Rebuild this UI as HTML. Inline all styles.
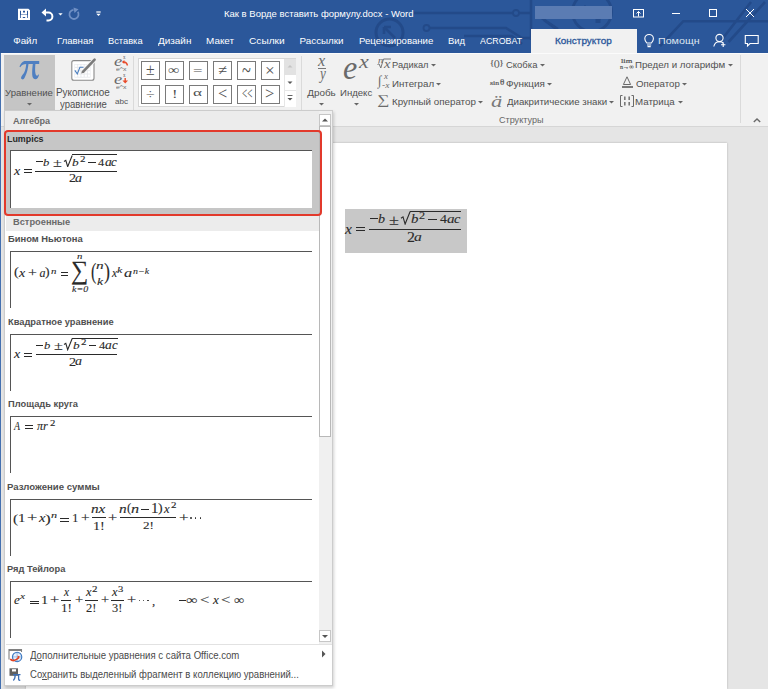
<!DOCTYPE html><html><head><meta charset="utf-8"><style>
html,body{margin:0;padding:0;}
body{width:768px;height:689px;overflow:hidden;position:relative;background:#fff;font-family:"Liberation Sans",sans-serif;}
.b{position:absolute;}
.t{position:absolute;white-space:nowrap;transform-origin:0 0;}
.s{}
</style></head><body>
<div class="b" style="left:0px;top:126px;width:768px;height:563px;background:#e5e5e5;"></div>
<div class="b" style="left:26px;top:143px;width:701px;height:546px;background:#fff;box-shadow:0 0 2px rgba(0,0,0,.25);"></div>
<div class="b" style="left:345px;top:209px;width:122px;height:44px;background:#c8c8c8;"></div>
<div class="b" style="left:0px;top:0px;width:768px;height:53px;background:#2b579a;"></div>
<svg class="b" style="left:0;top:0" width="768" height="53" viewBox="0 0 768 53">
<g stroke="#234a89" stroke-width="2.6" fill="none">
<path d="M414 13 H531"/><circle cx="516" cy="13" r="3" stroke-width="1.8" fill="#2b579a"/>
<path d="M531 0 V40"/>
<path d="M429 28 H506 L522 38 H531"/><circle cx="426.5" cy="28" r="3" stroke-width="1.8" fill="#2b579a"/>
<path d="M464 36 H512 L522 44"/>
<circle cx="389.5" cy="32.5" r="13.5" stroke-width="3"/>
<path d="M384 27 L395 38 M384 27 V34 M384 27 H391" stroke-width="2.6"/>
<path d="M544 20 L560 32"/>
<circle cx="592" cy="12" r="19.5" stroke-width="2.8"/><path d="M584 6 L600 20" stroke-width="2.8"/><rect x="595.5" y="18" width="5" height="5" fill="#234a89" stroke="none"/><path d="M540 17 L558 29"/>
<path d="M660 46 L683.3 21.2 H768 M721.5 40 L751 2 M728.5 42 L765 2"/>
</g></svg>
<svg class="b" style="left:0;top:0" width="110" height="28" viewBox="0 0 110 28">
<g fill="none" stroke="#fff" stroke-width="2">
<path d="M19 9.7 H28 L29 10.7 V19 H19 Z"/>
<path d="M22 9.7 V13.6 H26 V9.7"/>
<path d="M21.8 19 V16 H26.2 V19"/>
</g>
<g fill="none" stroke="#fff" stroke-width="2">
<path d="M43.5 12.6 H48.5 A3.9 3.9 0 0 1 48.5 20.4 H46.5"/>
</g>
<path d="M41.5 12.6 L46 8.6 V16.6 Z" fill="#fff"/>
<path d="M58.3 13.3 H62.7 L60.5 15.5 Z" fill="#fff"/>
<g fill="none" stroke="#6f8fc4" stroke-width="1.8">
<path d="M77.8 11.8 A4.6 4.6 0 1 1 73.5 9.8"/>
</g>
<path d="M73.5 7.5 L78.5 9.2 L74.5 13 Z" fill="#6f8fc4"/>
<path d="M96.3 12 H100.7" stroke="#fff" stroke-width="1.2"/>
<path d="M96.3 13.8 H100.7 L98.5 16 Z" fill="#fff"/>
</svg>
<span class="t s" style="left:224.04px;top:8.00px;font-size:9.8px;line-height:11px;color:#fff;font-family:'Liberation Sans', sans-serif;transform:scaleX(0.9697);">Как в Ворде вставить формулу.docx - Word</span>
<div class="b" style="left:535px;top:6px;width:77px;height:13px;background:#5b7cb3;"></div>
<svg class="b" style="left:620;top:0" width="148" height="28" viewBox="620 0 148 28">
<g fill="none" stroke="#fff" stroke-width="1">
<rect x="633.5" y="9.5" width="10" height="7.5"/>
<path d="M638.5 16.5 V11.5 M636.5 13.5 L638.5 11.5 L640.5 13.5"/>
<path d="M672 13.5 H680"/>
<rect x="709.5" y="9.5" width="7" height="7"/>
<path d="M746 9 L754 17 M754 9 L746 17"/>
</g></svg>
<span class="t s" style="left:13.21px;top:34.80px;font-size:9.8px;line-height:11px;color:#fff;font-family:'Liberation Sans', sans-serif;">Файл</span>
<span class="t s" style="left:57.23px;top:34.80px;font-size:9.8px;line-height:11px;color:#fff;font-family:'Liberation Sans', sans-serif;transform:scaleX(0.9758);">Главная</span>
<span class="t s" style="left:107.76px;top:34.80px;font-size:9.8px;line-height:11px;color:#fff;font-family:'Liberation Sans', sans-serif;transform:scaleX(0.9488);">Вставка</span>
<span class="t s" style="left:157.95px;top:34.80px;font-size:9.8px;line-height:11px;color:#fff;font-family:'Liberation Sans', sans-serif;transform:scaleX(1.0142);">Дизайн</span>
<span class="t s" style="left:205.81px;top:34.80px;font-size:9.8px;line-height:11px;color:#fff;font-family:'Liberation Sans', sans-serif;transform:scaleX(1.0129);">Макет</span>
<span class="t s" style="left:249.49px;top:34.80px;font-size:9.8px;line-height:11px;color:#fff;font-family:'Liberation Sans', sans-serif;transform:scaleX(1.0354);">Ссылки</span>
<span class="t s" style="left:299.61px;top:34.80px;font-size:9.8px;line-height:11px;color:#fff;font-family:'Liberation Sans', sans-serif;">Рассылки</span>
<span class="t s" style="left:358.73px;top:34.80px;font-size:9.8px;line-height:11px;color:#fff;font-family:'Liberation Sans', sans-serif;transform:scaleX(0.9828);">Рецензирование</span>
<span class="t s" style="left:447.85px;top:34.80px;font-size:9.8px;line-height:11px;color:#fff;font-family:'Liberation Sans', sans-serif;transform:scaleX(0.9607);">Вид</span>
<span class="t s" style="left:479.60px;top:34.80px;font-size:9.8px;line-height:11px;color:#fff;font-family:'Liberation Sans', sans-serif;transform:scaleX(0.9020);">ACROBAT</span>
<div class="b" style="left:531px;top:28.5px;width:106px;height:25.5px;background:#f1f1f1;"></div>
<span class="t s" style="left:554.60px;top:35.30px;font-size:9.8px;line-height:11px;color:#2b579a;font-family:'Liberation Sans', sans-serif;transform:scaleX(1.0168);-webkit-text-stroke:0.3px currentColor;">Конструктор</span>
<svg class="b" style="left:640;top:28" width="128" height="24" viewBox="640 28 128 24">
<g fill="none" stroke="#fff" stroke-width="1.1">
<path d="M646.8 43 C645 41 644.8 39.5 644.8 38.8 A4.3 4.3 0 0 1 653.4 38.8 C653.4 39.5 653.2 41 651.4 43 Z"/>
<path d="M647 45 H651.2 M647.5 46.6 H650.7"/>
<circle cx="719.5" cy="38" r="3.6"/>
<path d="M713.8 46.5 C714.5 43 716.8 41.8 719.5 41.8 C721 41.8 722.3 42.2 723.2 43"/>
<path d="M723.2 42.6 V47 M721 44.8 H725.4"/>
<path d="M745.3 35.5 H758.2 V43.5 H750 L747.5 46 V43.5 H745.3 Z"/>
</g></svg>
<span class="t s" style="left:658.15px;top:34.80px;font-size:9.8px;line-height:11px;color:#dde5f0;font-family:'Liberation Sans', sans-serif;transform:scaleX(1.0899);">Помощн</span>
<div class="b" style="left:0px;top:53px;width:768px;height:74px;background:#f1f1f1;border-bottom:1px solid #d6d6d6;box-sizing:border-box;"></div>
<div class="b" style="left:0px;top:53px;width:1px;height:636px;background:#4470b0;"></div>
<div class="b" style="left:1px;top:53px;width:767px;height:1px;background:#fbfbfb;"></div>
<div class="b" style="left:4px;top:55px;width:51px;height:57px;background:#c5c5c5;"></div>
<svg class="b" style="left:0;top:52px" width="60" height="30" viewBox="0 52 60 30">
<path fill="#4f7fc1" d="M19.5 66.8 C20.8 63.6 22.4 61.1 25.5 61.1 H39.2 V63.9 H35.4 C35.1 67 34.9 71 35.5 73.8 C35.9 75.6 36.9 76.2 38.1 75.1 L39.1 73.9 C38.7 77.3 37.2 79.3 35.2 79.3 C33.1 79.3 32.3 77.2 32.2 74.6 C32 71 32.4 67 32.8 63.9 H28.5 C28 68 27.2 72.3 25.6 75.5 C24.8 77.3 24.5 79.4 22.6 79.4 C21.3 79.4 20.8 78.4 21.2 77.1 C21.7 75.6 23.3 74.4 24.2 72.6 C25.5 69.8 26 66.6 26.2 63.9 C23.8 63.9 21.6 64.6 20.3 67.2 Z"/>
</svg>
<span class="t s" style="left:5.16px;top:86.60px;font-size:9.9px;line-height:11px;color:#505050;font-family:'Liberation Sans', sans-serif;transform:scaleX(0.9662);">Уравнение</span>
<svg class="b" style="left:25.7px;top:102.4px" width="7" height="5"><path d="M1 1 H6 L3.5 3.5 Z" fill="#666"/></svg>
<svg class="b" style="left:60px;top:52px" width="50" height="35" viewBox="60 52 50 35">
<rect x="71.8" y="60.6" width="22.2" height="19.6" rx="2" fill="#fff" stroke="#8a8a8a" stroke-width="1.1"/>
<rect x="74.5" y="64" width="16" height="13.6" fill="#e6e8ec"/><rect x="75.0" y="64.6" width="2.3" height="2.3" fill="#fff"/><rect x="75.0" y="67.9" width="2.3" height="2.3" fill="#fff"/><rect x="75.0" y="71.2" width="2.3" height="2.3" fill="#fff"/><rect x="75.0" y="74.5" width="2.3" height="2.3" fill="#fff"/><rect x="78.2" y="64.6" width="2.3" height="2.3" fill="#fff"/><rect x="78.2" y="67.9" width="2.3" height="2.3" fill="#fff"/><rect x="78.2" y="71.2" width="2.3" height="2.3" fill="#fff"/><rect x="78.2" y="74.5" width="2.3" height="2.3" fill="#fff"/><rect x="81.4" y="64.6" width="2.3" height="2.3" fill="#fff"/><rect x="81.4" y="67.9" width="2.3" height="2.3" fill="#fff"/><rect x="81.4" y="71.2" width="2.3" height="2.3" fill="#fff"/><rect x="81.4" y="74.5" width="2.3" height="2.3" fill="#fff"/><rect x="84.6" y="64.6" width="2.3" height="2.3" fill="#fff"/><rect x="84.6" y="67.9" width="2.3" height="2.3" fill="#fff"/><rect x="84.6" y="71.2" width="2.3" height="2.3" fill="#fff"/><rect x="84.6" y="74.5" width="2.3" height="2.3" fill="#fff"/><rect x="87.8" y="64.6" width="2.3" height="2.3" fill="#fff"/><rect x="87.8" y="67.9" width="2.3" height="2.3" fill="#fff"/><rect x="87.8" y="71.2" width="2.3" height="2.3" fill="#fff"/><rect x="87.8" y="74.5" width="2.3" height="2.3" fill="#fff"/>
<path d="M74.8 70.4 L77.3 73.9 L79.9 67.2 H83.5" fill="none" stroke="#4a7ebf" stroke-width="1.1"/>
<path d="M95 59.3 L81.6 73.2" stroke="#f1f1f1" stroke-width="4.5"/>
<path d="M94.6 59.7 L83.2 71.6" stroke="#7a7a7a" stroke-width="2.6" stroke-linecap="round"/>
<path d="M82.1 70.4 L84.4 72.6 L81.2 73.6 Z" fill="#7a7a7a"/>
</svg>
<span class="t s" style="left:56.21px;top:86.75px;font-size:10.2px;line-height:11px;color:#505050;font-family:'Liberation Sans', sans-serif;transform:scaleX(0.9721);">Рукописное</span>
<span class="t s" style="left:60.20px;top:99.40px;font-size:10.2px;line-height:11px;color:#505050;font-family:'Liberation Sans', sans-serif;transform:scaleX(0.9351);">уравнение</span>
<span class="t" style="left:114.35px;top:52.66px;font-size:14.17px;line-height:16px;color:#6a6a6a;font-family:'Liberation Serif', serif;font-style:italic;transform:scaleX(1.3032);">e</span>
<span class="t" style="left:123.35px;top:54.40px;font-size:5.22px;line-height:6px;color:#6a6a6a;font-family:'Liberation Serif', serif;transform:scaleX(0.9583);">x</span>
<span class="t" style="left:115.72px;top:66.65px;font-size:4.86px;line-height:5px;color:#6a6a6a;font-family:'Liberation Sans', sans-serif;transform:scaleX(1.4237);">e^x</span>
<svg class="b" style="left:120px;top:58px" width="10" height="10"><path d="M3 4 Q6.5 3.5 7.5 7.5" stroke="#e84a2a" stroke-width="1.4" fill="none"/><path d="M1.8 4 L4.4 2 L4.4 6 Z" fill="#e84a2a"/></svg>
<span class="t" style="left:114.35px;top:70.66px;font-size:14.17px;line-height:16px;color:#6a6a6a;font-family:'Liberation Serif', serif;font-style:italic;transform:scaleX(1.3032);">e</span>
<span class="t" style="left:123.35px;top:72.40px;font-size:5.22px;line-height:6px;color:#6a6a6a;font-family:'Liberation Serif', serif;transform:scaleX(0.9583);">x</span>
<span class="t" style="left:115.72px;top:84.65px;font-size:4.86px;line-height:5px;color:#6a6a6a;font-family:'Liberation Sans', sans-serif;transform:scaleX(1.4237);">e^x</span>
<svg class="b" style="left:120px;top:76px" width="10" height="10"><path d="M5.2 2 V5" stroke="#e84a2a" stroke-width="1.4"/><path d="M2.5 4.5 H8 L5.2 7.5 Z" fill="#e84a2a"/></svg>
<span class="t" style="left:114.58px;top:96.93px;font-size:7.35px;line-height:9px;color:#555;font-family:'Liberation Sans', sans-serif;transform:scaleX(1.1012);">abc</span>
<div class="b" style="left:133px;top:56px;width:1px;height:68px;background:#dadada;"></div>
<div class="b" style="left:137.5px;top:58px;width:158.5px;height:49px;background:#fff;border:1px solid #d6d6d6;box-sizing:border-box;"></div>
<div class="b" style="left:141px;top:61px;width:19px;height:19px;background:#fff;border:1px solid #7a7a7a;box-sizing:border-box;"></div>
<div class="b" style="left:165px;top:61px;width:19px;height:19px;background:#fff;border:1px solid #7a7a7a;box-sizing:border-box;"></div>
<div class="b" style="left:189px;top:61px;width:19px;height:19px;background:#fff;border:1px solid #7a7a7a;box-sizing:border-box;"></div>
<div class="b" style="left:213px;top:61px;width:19px;height:19px;background:#fff;border:1px solid #7a7a7a;box-sizing:border-box;"></div>
<div class="b" style="left:237px;top:61px;width:19px;height:19px;background:#fff;border:1px solid #7a7a7a;box-sizing:border-box;"></div>
<div class="b" style="left:261px;top:61px;width:19px;height:19px;background:#fff;border:1px solid #7a7a7a;box-sizing:border-box;"></div>
<div class="b" style="left:141px;top:85px;width:19px;height:19px;background:#fff;border:1px solid #7a7a7a;box-sizing:border-box;"></div>
<div class="b" style="left:165px;top:85px;width:19px;height:19px;background:#fff;border:1px solid #7a7a7a;box-sizing:border-box;"></div>
<div class="b" style="left:189px;top:85px;width:19px;height:19px;background:#fff;border:1px solid #7a7a7a;box-sizing:border-box;"></div>
<div class="b" style="left:213px;top:85px;width:19px;height:19px;background:#fff;border:1px solid #7a7a7a;box-sizing:border-box;"></div>
<div class="b" style="left:237px;top:85px;width:19px;height:19px;background:#fff;border:1px solid #7a7a7a;box-sizing:border-box;"></div>
<div class="b" style="left:261px;top:85px;width:19px;height:19px;background:#fff;border:1px solid #7a7a7a;box-sizing:border-box;"></div>
<div class="b" style="left:284px;top:58.5px;width:11.5px;height:16.0px;background:#e2e2e2;"></div>
<div class="b" style="left:284px;top:74.5px;width:11.5px;height:32.0px;background:#fff;border-left:1px solid #e6e6e6;box-sizing:border-box;"></div>
<div class="b" style="left:284px;top:90px;width:11.5px;height:1px;background:#e6e6e6;"></div>
<svg class="b" style="left:284px;top:58px" width="12" height="50"><path d="M3.5 9.5 H8.5 L6 7 Z" fill="#c4c4c4"/><path d="M3.5 23.5 H8.5 L6 26 Z" fill="#555"/><path d="M3.5 37.5 H8.5" stroke="#555" stroke-width="0.9"/><path d="M3.5 40 H8.5 L6 42.5 Z" fill="#555"/></svg>
<div class="b" style="left:301px;top:56px;width:1px;height:68px;background:#dadada;"></div>
<span class="t" style="left:318.44px;top:51.00px;font-size:16.74px;line-height:19px;color:#6a6a6a;font-family:'Liberation Serif', serif;font-style:italic;transform:scaleX(0.9691);">x</span>
<div class="b" style="left:318px;top:67.6px;width:8px;height:1.2000000000000028px;background:#777;"></div>
<span class="t" style="left:319.62px;top:64.73px;font-size:16.15px;line-height:17px;color:#6a6a6a;font-family:'Liberation Serif', serif;font-style:italic;transform:scaleX(0.8179);">y</span>
<span class="t s" style="left:307.25px;top:86.70px;font-size:9.9px;line-height:11px;color:#505050;font-family:'Liberation Sans', sans-serif;">Дробь</span>
<svg class="b" style="left:318.0px;top:102.4px" width="7" height="5"><path d="M1 1 H6 L3.5 3.5 Z" fill="#666"/></svg>
<span class="t" style="left:343.34px;top:49.26px;font-size:33.54px;line-height:37px;color:#6a6a6a;font-family:'Liberation Serif', serif;font-style:italic;transform:scaleX(0.9556);">e</span>
<span class="t" style="left:358.63px;top:50.60px;font-size:19.13px;line-height:21px;color:#6a6a6a;font-family:'Liberation Serif', serif;font-style:italic;transform:scaleX(1.1500);">x</span>
<span class="t s" style="left:339.83px;top:86.70px;font-size:9.9px;line-height:11px;color:#505050;font-family:'Liberation Sans', sans-serif;transform:scaleX(0.9713);">Индекс</span>
<svg class="b" style="left:353.0px;top:102.4px" width="7" height="5"><path d="M1 1 H6 L3.5 3.5 Z" fill="#666"/></svg>
<span class="t s" style="left:392.25px;top:59.00px;font-size:9.9px;line-height:11px;color:#505050;font-family:'Liberation Sans', sans-serif;transform:scaleX(0.9407);">Радикал</span>
<svg class="b" style="left:429.75px;top:63.0px" width="7" height="5"><path d="M1 1 H6 L3.5 3.5 Z" fill="#666"/></svg>
<span class="t s" style="left:392.22px;top:77.70px;font-size:9.9px;line-height:11px;color:#505050;font-family:'Liberation Sans', sans-serif;transform:scaleX(0.9823);">Интеграл</span>
<svg class="b" style="left:435.2px;top:81.7px" width="7" height="5"><path d="M1 1 H6 L3.5 3.5 Z" fill="#666"/></svg>
<span class="t s" style="left:392.22px;top:96.00px;font-size:9.9px;line-height:11px;color:#505050;font-family:'Liberation Sans', sans-serif;transform:scaleX(0.9898);">Крупный оператор</span>
<svg class="b" style="left:477.4px;top:100.0px" width="7" height="5"><path d="M1 1 H6 L3.5 3.5 Z" fill="#666"/></svg>
<span class="t s" style="left:506.13px;top:59.00px;font-size:9.9px;line-height:11px;color:#505050;font-family:'Liberation Sans', sans-serif;transform:scaleX(0.9591);">Скобка</span>
<svg class="b" style="left:539.1px;top:63.0px" width="7" height="5"><path d="M1 1 H6 L3.5 3.5 Z" fill="#666"/></svg>
<span class="t s" style="left:506.05px;top:77.70px;font-size:9.9px;line-height:11px;color:#505050;font-family:'Liberation Sans', sans-serif;">Функция</span>
<svg class="b" style="left:545.9px;top:81.7px" width="7" height="5"><path d="M1 1 H6 L3.5 3.5 Z" fill="#666"/></svg>
<span class="t s" style="left:506.55px;top:96.00px;font-size:9.9px;line-height:11px;color:#505050;font-family:'Liberation Sans', sans-serif;transform:scaleX(0.9806);">Диакритические знаки</span>
<svg class="b" style="left:607.7px;top:100.0px" width="7" height="5"><path d="M1 1 H6 L3.5 3.5 Z" fill="#666"/></svg>
<span class="t s" style="left:635.42px;top:59.00px;font-size:9.9px;line-height:11px;color:#505050;font-family:'Liberation Sans', sans-serif;transform:scaleX(0.9825);">Предел и логарифм</span>
<svg class="b" style="left:726.6px;top:63.0px" width="7" height="5"><path d="M1 1 H6 L3.5 3.5 Z" fill="#666"/></svg>
<span class="t s" style="left:635.76px;top:77.70px;font-size:9.9px;line-height:11px;color:#505050;font-family:'Liberation Sans', sans-serif;transform:scaleX(0.9828);">Оператор</span>
<svg class="b" style="left:680.9px;top:81.7px" width="7" height="5"><path d="M1 1 H6 L3.5 3.5 Z" fill="#666"/></svg>
<span class="t s" style="left:635.42px;top:96.00px;font-size:9.9px;line-height:11px;color:#505050;font-family:'Liberation Sans', sans-serif;transform:scaleX(0.9848);">Матрица</span>
<svg class="b" style="left:676.7px;top:100.0px" width="7" height="5"><path d="M1 1 H6 L3.5 3.5 Z" fill="#666"/></svg>
<span class="t s" style="left:498.75px;top:114.10px;font-size:9.4px;line-height:11px;color:#666;font-family:'Liberation Sans', sans-serif;transform:scaleX(0.9661);">Структуры</span>
<div class="b" style="left:740px;top:55px;width:1px;height:68px;background:#dadada;"></div>
<svg class="b" style="left:750px;top:115px" width="14" height="10"><path d="M3.8 7 L7 4 L10.2 7" stroke="#6a6a6a" stroke-width="1.4" fill="none"/></svg>
<span class="t" style="left:145.97px;top:61.00px;font-size:15.75px;line-height:17px;color:#505050;font-family:'Liberation Serif', serif;transform:scaleX(0.9995);">±</span>
<span class="t" style="left:168.46px;top:62.86px;font-size:12.21px;line-height:14px;color:#505050;font-family:'Liberation Serif', serif;transform:scaleX(1.2671);">∞</span>
<span class="t" style="left:193.36px;top:65.13px;font-size:10.40px;line-height:11px;color:#505050;font-family:'Liberation Serif', serif;transform:scaleX(1.6129);">=</span>
<span class="t" style="left:217.75px;top:61.97px;font-size:14.91px;line-height:16px;color:#505050;font-family:'Liberation Serif', serif;transform:scaleX(1.0848);">≠</span>
<span class="t" style="left:241.59px;top:57.68px;font-size:22.35px;line-height:25px;color:#505050;font-family:'Liberation Serif', serif;transform:scaleX(0.7304);">~</span>
<span class="t" style="left:265.02px;top:61.25px;font-size:17.28px;line-height:19px;color:#505050;font-family:'Liberation Serif', serif;transform:scaleX(1.0000);">×</span>
<span class="t" style="left:145.97px;top:86.71px;font-size:12.77px;line-height:14px;color:#505050;font-family:'Liberation Serif', serif;transform:scaleX(1.2333);">÷</span>
<span class="t" style="left:171.75px;top:87.22px;font-size:11.79px;line-height:14px;color:#505050;font-family:'Liberation Serif', serif;transform:scaleX(1.4135);">!</span>
<span class="t" style="left:193.30px;top:87.39px;font-size:10.62px;line-height:11px;color:#505050;font-family:'Liberation Serif', serif;transform:scaleX(1.6192);">α</span>
<span class="t" style="left:217.58px;top:84.48px;font-size:16.49px;line-height:19px;color:#505050;font-family:'Liberation Serif', serif;transform:scaleX(0.9909);">&lt;</span>
<span class="t" style="left:241.54px;top:84.48px;font-size:16.49px;line-height:19px;color:#505050;font-family:'Liberation Serif', serif;transform:scaleX(0.5533);">&lt;&lt;</span>
<span class="t" style="left:265.37px;top:84.48px;font-size:16.49px;line-height:19px;color:#505050;font-family:'Liberation Serif', serif;transform:scaleX(1.0039);">&gt;</span>
<span class="t" style="left:377.63px;top:55.50px;font-size:7.45px;line-height:9px;color:#6a6a6a;font-family:'Liberation Serif', serif;font-style:italic;transform:scaleX(1.4218);">n</span>
<svg class="b" style="left:376px;top:58px" width="16" height="12"><path d="M1.5 6.5 L3 5.8 L4.8 10 L7.5 1 H15" fill="none" stroke="#6a6a6a" stroke-width="0.9"/></svg>
<span class="t" style="left:383.72px;top:56.40px;font-size:13.26px;line-height:15px;color:#6a6a6a;font-family:'Liberation Serif', serif;font-style:italic;transform:scaleX(1.0893);">x</span>
<span class="t" style="left:378.22px;top:73.05px;font-size:13.50px;line-height:15px;color:#6a6a6a;font-family:'Liberation Serif', serif;transform:scaleX(0.9745);">∫</span>
<span class="t" style="left:383.63px;top:72.00px;font-size:7.83px;line-height:9px;color:#6a6a6a;font-family:'Liberation Serif', serif;font-style:italic;transform:scaleX(1.1358);">x</span>
<span class="t" style="left:382.17px;top:81.20px;font-size:8.04px;line-height:9px;color:#6a6a6a;font-family:'Liberation Serif', serif;font-style:italic;transform:scaleX(1.1840);">-x</span>
<span class="t" style="left:377.44px;top:91.81px;font-size:13.45px;line-height:15px;color:#6a6a6a;font-family:'Liberation Serif', serif;transform:scaleX(1.2641);">∑</span>
<span class="t" style="left:490.35px;top:59.45px;font-size:7.69px;line-height:9px;color:#555;font-family:'Liberation Serif', serif;transform:scaleX(1.0886);-webkit-text-stroke:0.2px currentColor;">{()}</span>
<span class="t" style="left:490.39px;top:78.93px;font-size:7.01px;line-height:8px;color:#555;font-family:'Liberation Serif', serif;transform:scaleX(1.1045);-webkit-text-stroke:0.2px currentColor;">sin</span>
<span class="t" style="left:499.70px;top:78.93px;font-size:7.18px;line-height:8px;color:#555;font-family:'Liberation Serif', serif;transform:scaleX(1.2494);-webkit-text-stroke:0.2px currentColor;">θ</span>
<span class="t" style="left:491.22px;top:90.72px;font-size:17.73px;line-height:20px;color:#7a7a7a;font-family:'Liberation Serif', serif;font-style:italic;transform:scaleX(1.2709);">ä</span>
<span class="t" style="left:621.13px;top:57.30px;font-size:6.91px;line-height:7px;color:#555;font-family:'Liberation Serif', serif;transform:scaleX(1.2252);-webkit-text-stroke:0.2px currentColor;">lim</span>
<span class="t" style="left:619.98px;top:63.00px;font-size:6.67px;line-height:7px;color:#555;font-family:'Liberation Serif', serif;transform:scaleX(0.9327);-webkit-text-stroke:0.2px currentColor;">n→∞</span>
<svg class="b" style="left:620px;top:76px" width="14" height="12"><path d="M3.4 8.5 L7 0.8 L10.6 8.5 Z" fill="none" stroke="#6a6a6a" stroke-width="1"/></svg>
<div class="b" style="left:621.5px;top:86.2px;width:11.5px;height:1.3999999999999915px;background:#7a7a7a;"></div>
<svg class="b" style="left:619px;top:94px" width="16" height="14"><path d="M3.5 1.5 H1.5 V12.5 H3.5 M12.5 1.5 H14.5 V12.5 H12.5" stroke="#6a6a6a" fill="none" stroke-width="1"/><g fill="#777"><rect x="5" y="2.5" width="1.6" height="3.5"/><rect x="9.4" y="2.5" width="1.6" height="3.5"/><rect x="5" y="8" width="1.6" height="3.5"/><rect x="9.4" y="8" width="1.6" height="3.5"/></g></svg>
<div class="b" style="left:4px;top:110px;width:329px;height:576px;background:#fff;border:1px solid #cccccc;box-sizing:border-box;box-shadow:1px 2px 3px rgba(0,0,0,.18);"></div>
<div class="b" style="left:5px;top:111px;width:314px;height:19px;background:#ececec;"></div>
<span class="t s" style="left:12.77px;top:115.70px;font-size:9px;line-height:10px;color:#6a6a6a;font-family:'Liberation Sans', sans-serif;font-weight:bold;transform:scaleX(1.0064);">Алгебра</span>
<div class="b" style="left:6px;top:131px;width:314px;height:83px;background:#c6c6c6;"></div>
<span class="t s" style="left:7.02px;top:134.00px;font-size:9px;line-height:10px;color:#2a2a2a;font-family:'Liberation Sans', sans-serif;font-weight:bold;transform:scaleX(0.9877);">Lumpics</span>
<div class="b" style="left:10px;top:150px;width:302px;height:57.5px;background:#fff;border-left:1.2px solid #555;border-top:1.2px solid #555;box-sizing:border-box;"></div>
<div class="b" style="left:5.8px;top:215.7px;width:313.2px;height:15.100000000000023px;background:#ececec;"></div>
<span class="t s" style="left:12.80px;top:217.00px;font-size:9px;line-height:10px;color:#6a6a6a;font-family:'Liberation Sans', sans-serif;font-weight:bold;transform:scaleX(1.0306);">Встроенные</span>
<span class="t s" style="left:7.99px;top:234.40px;font-size:9px;line-height:10px;color:#505050;font-family:'Liberation Sans', sans-serif;font-weight:bold;transform:scaleX(1.0423);">Бином Ньютона</span>
<div class="b" style="left:10px;top:251.0px;width:302px;height:57.0px;background:#fff;border-left:1.2px solid #555;border-top:1.2px solid #555;box-sizing:border-box;"></div>
<span class="t s" style="left:8.00px;top:316.90px;font-size:9px;line-height:10px;color:#505050;font-family:'Liberation Sans', sans-serif;font-weight:bold;transform:scaleX(1.0322);">Квадратное уравнение</span>
<div class="b" style="left:10px;top:333.5px;width:302px;height:57.0px;background:#fff;border-left:1.2px solid #555;border-top:1.2px solid #555;box-sizing:border-box;"></div>
<span class="t s" style="left:7.99px;top:399.40px;font-size:9px;line-height:10px;color:#505050;font-family:'Liberation Sans', sans-serif;font-weight:bold;transform:scaleX(1.0352);">Площадь круга</span>
<div class="b" style="left:10px;top:416.0px;width:302px;height:57.0px;background:#fff;border-left:1.2px solid #555;border-top:1.2px solid #555;box-sizing:border-box;"></div>
<span class="t s" style="left:7.18px;top:481.90px;font-size:9px;line-height:10px;color:#505050;font-family:'Liberation Sans', sans-serif;font-weight:bold;transform:scaleX(1.0656);">Разложение суммы</span>
<div class="b" style="left:10px;top:498.5px;width:302px;height:57.0px;background:#fff;border-left:1.2px solid #555;border-top:1.2px solid #555;box-sizing:border-box;"></div>
<span class="t s" style="left:7.20px;top:564.40px;font-size:9px;line-height:10px;color:#505050;font-family:'Liberation Sans', sans-serif;font-weight:bold;transform:scaleX(1.0317);">Ряд Тейлора</span>
<div class="b" style="left:10px;top:581.0px;width:302px;height:57.0px;background:#fff;border-left:1.2px solid #555;border-top:1.2px solid #555;box-sizing:border-box;"></div>
<div class="b" style="left:319px;top:111px;width:13px;height:533px;background:#f0f0f0;"></div>
<div class="b" style="left:319px;top:114px;width:12px;height:11.5px;background:#fff;border:1px solid #c6c6c6;box-sizing:border-box;"></div>
<div class="b" style="left:319px;top:126px;width:12px;height:311px;background:#fff;border:1px solid #b8b8b8;box-sizing:border-box;"></div>
<div class="b" style="left:319px;top:630.4px;width:12px;height:12.100000000000023px;background:#fff;border:1px solid #c6c6c6;box-sizing:border-box;"></div>
<svg class="b" style="left:319px;top:114px" width="12" height="12"><path d="M3 7.5 H9 L6 4.5 Z" fill="#555"/></svg>
<svg class="b" style="left:319px;top:630px" width="12" height="12"><path d="M3 5 H9 L6 8 Z" fill="#555"/></svg>
<div class="b" style="left:5.5px;top:644px;width:326.5px;height:1px;background:#e2e2e2;"></div>
<div class="b" style="left:3.7px;top:129.6px;width:318.1px;height:86.1px;background:transparent;border:2.8px solid #e2392b;border-radius:4px;box-sizing:border-box;"></div>
<svg class="b" style="left:6px;top:646px" width="20" height="38" viewBox="6 646 20 38">
<path d="M9 659.5 V649.5 H21.5 V652" fill="none" stroke="#808080" stroke-width="1.1"/>
<rect x="9" y="649" width="12.5" height="2" fill="#808080"/>
<circle cx="17.1" cy="656.9" r="4.6" fill="#e8f0fa" stroke="#3d79c2" stroke-width="1.3"/>
<path d="M13 656.9 H21.5 M17.1 652.5 V661.3" stroke="#8fb3e0" stroke-width="0.8"/>
<path d="M10.2 659.2 Q14 662.5 19 657.5" stroke="#e2401f" stroke-width="1.7" fill="none"/>
<path d="M17.5 655.5 L20 656.8 L17.8 659" fill="#e2401f"/>
<path d="M9.5 668.3 H18 V675.8 H9.5 Z" fill="#616161"/>
<rect x="12" y="669.2" width="4" height="2.3" fill="#fff"/>
<path d="M13 674.6 H20.5" stroke="#3d6fb6" stroke-width="1.2"/>
<path d="M15.2 674.6 C15.2 677.5 14.5 679.5 13.3 680.5 M18.6 674.6 V679 C18.6 680.2 19.3 680.5 20.3 680" stroke="#3d6fb6" stroke-width="1.3" fill="none"/>
</svg>
<span class="t s" style="left:30.15px;top:650.20px;font-size:10px;line-height:11px;color:#4a4a4a;font-family:'Liberation Sans', sans-serif;transform:scaleX(0.9604);">Дополнительные уравнения с сайта Office.com</span>
<span class="t s" style="left:29.72px;top:669.20px;font-size:10px;line-height:11px;color:#4a4a4a;font-family:'Liberation Sans', sans-serif;transform:scaleX(0.9569);">Сохранить выделенный фрагмент в коллекцию уравнений...</span>
<div class="b" style="left:36.5px;top:660px;width:5.5px;height:0.7999999999999545px;background:#555;"></div>
<div class="b" style="left:41.5px;top:679.4px;width:5.0px;height:0.8000000000000682px;background:#555;"></div>
<svg class="b" style="left:319px;top:649px" width="10" height="10"><path d="M3 1.5 V8.5 L6.5 5 Z" fill="#555"/></svg>
<span class="t" style="left:13.71px;top:163.00px;font-size:13.48px;line-height:15px;color:#2a2a2a;font-family:'Liberation Serif', serif;font-style:italic;transform:scaleX(1.0387);-webkit-text-stroke:0.1px currentColor;">x</span>
<div class="b" style="left:23.70px;top:169.30px;width:8.00px;height:1.0px;background:#2a2a2a"></div>
<div class="b" style="left:23.70px;top:172.10px;width:8.00px;height:1.0px;background:#2a2a2a"></div>
<div class="b" style="left:35.30px;top:170.55px;width:81.70px;height:1.1px;background:#2a2a2a"></div>
<div class="b" style="left:35.90px;top:161.20px;width:7.00px;height:1.0px;background:#2a2a2a"></div>
<span class="t" style="left:43.36px;top:155.69px;font-size:10.78px;line-height:12px;color:#2a2a2a;font-family:'Liberation Serif', serif;font-style:italic;transform:scaleX(1.1729);-webkit-text-stroke:0.1px currentColor;">b</span>
<span class="t" style="left:53.35px;top:156.00px;font-size:12.39px;line-height:14px;color:#2a2a2a;font-family:'Liberation Serif', serif;transform:scaleX(1.3052);-webkit-text-stroke:0.1px currentColor;">±</span>
<svg class="b" style="left:63.00px;top:153.70px" width="10.20" height="13.70"><path d="M1 7.44 L2.80 6.27 L4.69 12.70 L9.20 1.5" fill="none" stroke="#2a2a2a" stroke-width="1.1"/></svg>
<div class="b" style="left:71.90px;top:154.35px;width:45.40px;height:1.1px;background:#2a2a2a"></div>
<span class="t" style="left:72.33px;top:155.69px;font-size:10.78px;line-height:12px;color:#2a2a2a;font-family:'Liberation Serif', serif;font-style:italic;transform:scaleX(1.2368);-webkit-text-stroke:0.1px currentColor;">b</span>
<span class="t" style="left:80.10px;top:153.70px;font-size:9.09px;line-height:10px;color:#2a2a2a;font-family:'Liberation Serif', serif;transform:scaleX(1.2100);-webkit-text-stroke:0.1px currentColor;">2</span>
<div class="b" style="left:88.10px;top:161.70px;width:7.90px;height:1.0px;background:#2a2a2a"></div>
<span class="t" style="left:98.35px;top:155.80px;font-size:11.06px;line-height:12px;color:#2a2a2a;font-family:'Liberation Serif', serif;transform:scaleX(1.1277);-webkit-text-stroke:0.1px currentColor;">4</span>
<span class="t" style="left:104.59px;top:155.69px;font-size:11.46px;line-height:12px;color:#2a2a2a;font-family:'Liberation Serif', serif;font-style:italic;transform:scaleX(1.1837);-webkit-text-stroke:0.1px currentColor;">a</span>
<span class="t" style="left:111.11px;top:155.69px;font-size:11.46px;line-height:12px;color:#2a2a2a;font-family:'Liberation Serif', serif;font-style:italic;transform:scaleX(1.1205);-webkit-text-stroke:0.1px currentColor;">c</span>
<span class="t" style="left:68.66px;top:171.20px;font-size:12.42px;line-height:14px;color:#2a2a2a;font-family:'Liberation Serif', serif;transform:scaleX(1.1470);-webkit-text-stroke:0.1px currentColor;">2</span>
<span class="t" style="left:75.08px;top:172.09px;font-size:11.46px;line-height:12px;color:#2a2a2a;font-family:'Liberation Serif', serif;font-style:italic;transform:scaleX(1.2238);-webkit-text-stroke:0.1px currentColor;">a</span>
<span class="t" style="left:14.11px;top:346.40px;font-size:13.48px;line-height:15px;color:#2a2a2a;font-family:'Liberation Serif', serif;font-style:italic;transform:scaleX(1.0387);-webkit-text-stroke:0.1px currentColor;">x</span>
<div class="b" style="left:24.10px;top:352.70px;width:8.00px;height:1.0px;background:#2a2a2a"></div>
<div class="b" style="left:24.10px;top:355.50px;width:8.00px;height:1.0px;background:#2a2a2a"></div>
<div class="b" style="left:35.70px;top:353.95px;width:81.70px;height:1.1px;background:#2a2a2a"></div>
<div class="b" style="left:36.30px;top:344.60px;width:7.00px;height:1.0px;background:#2a2a2a"></div>
<span class="t" style="left:43.76px;top:339.09px;font-size:10.78px;line-height:12px;color:#2a2a2a;font-family:'Liberation Serif', serif;font-style:italic;transform:scaleX(1.1729);-webkit-text-stroke:0.1px currentColor;">b</span>
<span class="t" style="left:53.75px;top:339.40px;font-size:12.39px;line-height:14px;color:#2a2a2a;font-family:'Liberation Serif', serif;transform:scaleX(1.3052);-webkit-text-stroke:0.1px currentColor;">±</span>
<svg class="b" style="left:63.40px;top:337.10px" width="10.20" height="13.70"><path d="M1 7.43 L2.80 6.26 L4.69 12.70 L9.20 1.5" fill="none" stroke="#2a2a2a" stroke-width="1.1"/></svg>
<div class="b" style="left:72.30px;top:337.75px;width:45.40px;height:1.1px;background:#2a2a2a"></div>
<span class="t" style="left:72.73px;top:339.09px;font-size:10.78px;line-height:12px;color:#2a2a2a;font-family:'Liberation Serif', serif;font-style:italic;transform:scaleX(1.2368);-webkit-text-stroke:0.1px currentColor;">b</span>
<span class="t" style="left:80.50px;top:337.10px;font-size:9.09px;line-height:10px;color:#2a2a2a;font-family:'Liberation Serif', serif;transform:scaleX(1.2100);-webkit-text-stroke:0.1px currentColor;">2</span>
<div class="b" style="left:88.50px;top:345.10px;width:7.90px;height:1.0px;background:#2a2a2a"></div>
<span class="t" style="left:98.75px;top:339.20px;font-size:11.06px;line-height:12px;color:#2a2a2a;font-family:'Liberation Serif', serif;transform:scaleX(1.1277);-webkit-text-stroke:0.1px currentColor;">4</span>
<span class="t" style="left:104.99px;top:339.09px;font-size:11.46px;line-height:12px;color:#2a2a2a;font-family:'Liberation Serif', serif;font-style:italic;transform:scaleX(1.1837);-webkit-text-stroke:0.1px currentColor;">a</span>
<span class="t" style="left:111.51px;top:339.09px;font-size:11.46px;line-height:12px;color:#2a2a2a;font-family:'Liberation Serif', serif;font-style:italic;transform:scaleX(1.1205);-webkit-text-stroke:0.1px currentColor;">c</span>
<span class="t" style="left:69.06px;top:354.60px;font-size:12.42px;line-height:14px;color:#2a2a2a;font-family:'Liberation Serif', serif;transform:scaleX(1.1470);-webkit-text-stroke:0.1px currentColor;">2</span>
<span class="t" style="left:75.48px;top:355.49px;font-size:11.46px;line-height:12px;color:#2a2a2a;font-family:'Liberation Serif', serif;font-style:italic;transform:scaleX(1.2238);-webkit-text-stroke:0.1px currentColor;">a</span>
<span class="t" style="left:345.23px;top:220.55px;font-size:15.04px;line-height:16px;color:#2a2a2a;font-family:'Liberation Serif', serif;font-style:italic;transform:scaleX(1.0387);-webkit-text-stroke:0.1px currentColor;">x</span>
<div class="b" style="left:356.38px;top:227.19px;width:8.93px;height:1.116px;background:#2a2a2a"></div>
<div class="b" style="left:356.38px;top:230.32px;width:8.93px;height:1.116px;background:#2a2a2a"></div>
<div class="b" style="left:369.33px;top:228.59px;width:91.18px;height:1.2276000000000002px;background:#2a2a2a"></div>
<div class="b" style="left:370.00px;top:218.15px;width:7.81px;height:1.116px;background:#2a2a2a"></div>
<span class="t" style="left:378.32px;top:212.16px;font-size:12.03px;line-height:14px;color:#2a2a2a;font-family:'Liberation Serif', serif;font-style:italic;transform:scaleX(1.1729);-webkit-text-stroke:0.1px currentColor;">b</span>
<span class="t" style="left:389.48px;top:212.62px;font-size:13.83px;line-height:15px;color:#2a2a2a;font-family:'Liberation Serif', serif;transform:scaleX(1.3052);-webkit-text-stroke:0.1px currentColor;">±</span>
<svg class="b" style="left:400.36px;top:209.90px" width="11.15" height="15.06"><path d="M1 8.18 L3.01 6.88 L5.12 14.06 L10.15 1.5" fill="none" stroke="#2a2a2a" stroke-width="1.1"/></svg>
<div class="b" style="left:410.17px;top:210.51px;width:50.67px;height:1.2276000000000002px;background:#2a2a2a"></div>
<span class="t" style="left:410.66px;top:212.16px;font-size:12.03px;line-height:14px;color:#2a2a2a;font-family:'Liberation Serif', serif;font-style:italic;transform:scaleX(1.2368);-webkit-text-stroke:0.1px currentColor;">b</span>
<span class="t" style="left:419.33px;top:209.71px;font-size:10.15px;line-height:11px;color:#2a2a2a;font-family:'Liberation Serif', serif;transform:scaleX(1.2100);-webkit-text-stroke:0.1px currentColor;">2</span>
<div class="b" style="left:428.25px;top:218.71px;width:8.82px;height:1.116px;background:#2a2a2a"></div>
<span class="t" style="left:439.69px;top:212.29px;font-size:12.34px;line-height:14px;color:#2a2a2a;font-family:'Liberation Serif', serif;transform:scaleX(1.1277);-webkit-text-stroke:0.1px currentColor;">4</span>
<span class="t" style="left:446.66px;top:212.16px;font-size:12.79px;line-height:14px;color:#2a2a2a;font-family:'Liberation Serif', serif;font-style:italic;transform:scaleX(1.1837);-webkit-text-stroke:0.1px currentColor;">a</span>
<span class="t" style="left:453.94px;top:212.16px;font-size:12.79px;line-height:14px;color:#2a2a2a;font-family:'Liberation Serif', serif;font-style:italic;transform:scaleX(1.1205);-webkit-text-stroke:0.1px currentColor;">c</span>
<span class="t" style="left:406.56px;top:229.59px;font-size:13.87px;line-height:15px;color:#2a2a2a;font-family:'Liberation Serif', serif;transform:scaleX(1.1470);-webkit-text-stroke:0.1px currentColor;">2</span>
<span class="t" style="left:413.72px;top:230.46px;font-size:12.79px;line-height:14px;color:#2a2a2a;font-family:'Liberation Serif', serif;font-style:italic;transform:scaleX(1.2238);-webkit-text-stroke:0.1px currentColor;">a</span>
<span class="t" style="left:13.61px;top:264.91px;font-size:12.53px;line-height:14px;color:#2a2a2a;font-family:'Liberation Serif', serif;transform:scaleX(1.1426);-webkit-text-stroke:0.1px currentColor;">(</span>
<span class="t" style="left:18.61px;top:265.60px;font-size:12px;line-height:14px;color:#2a2a2a;font-family:'Liberation Serif', serif;font-style:italic;transform:scaleX(1.1667);-webkit-text-stroke:0.1px currentColor;">x</span>
<span class="t" style="left:28.02px;top:265.50px;font-size:12px;line-height:14px;color:#2a2a2a;font-family:'Liberation Serif', serif;transform:scaleX(1.3082);-webkit-text-stroke:0.1px currentColor;">+</span>
<span class="t" style="left:39.44px;top:265.60px;font-size:12px;line-height:14px;color:#2a2a2a;font-family:'Liberation Serif', serif;font-style:italic;-webkit-text-stroke:0.1px currentColor;">a</span>
<span class="t" style="left:44.58px;top:264.91px;font-size:12.53px;line-height:14px;color:#2a2a2a;font-family:'Liberation Serif', serif;transform:scaleX(1.1053);-webkit-text-stroke:0.1px currentColor;">)</span>
<span class="t" style="left:51.37px;top:266.00px;font-size:8.64px;line-height:10px;color:#2a2a2a;font-family:'Liberation Serif', serif;font-style:italic;transform:scaleX(1.2663);-webkit-text-stroke:0.1px currentColor;">n</span>
<div class="b" style="left:60.60px;top:272.10px;width:7.80px;height:1px;background:#2a2a2a"></div>
<div class="b" style="left:60.60px;top:274.80px;width:7.80px;height:1px;background:#2a2a2a"></div>
<span class="t" style="left:71.00px;top:255.94px;font-size:26.32px;line-height:29px;color:#2a2a2a;font-family:'Liberation Serif', serif;transform:scaleX(0.9276);-webkit-text-stroke:0.1px currentColor;">∑</span>
<span class="t" style="left:77.02px;top:251.00px;font-size:8.64px;line-height:10px;color:#2a2a2a;font-family:'Liberation Serif', serif;font-style:italic;transform:scaleX(1.2527);-webkit-text-stroke:0.1px currentColor;">n</span>
<span class="t" style="left:72.40px;top:285.12px;font-size:7.52px;line-height:9px;color:#2a2a2a;font-family:'Liberation Serif', serif;font-style:italic;transform:scaleX(1.3302);-webkit-text-stroke:0.1px currentColor;">k=0</span>
<span class="t" style="left:90.68px;top:258.01px;font-size:23.19px;line-height:26px;color:#2a2a2a;font-family:'Liberation Serif', serif;transform:scaleX(0.6934);-webkit-text-stroke:0.1px currentColor;">(</span>
<span class="t" style="left:96.16px;top:260.30px;font-size:10.2px;line-height:11px;color:#2a2a2a;font-family:'Liberation Serif', serif;font-style:italic;transform:scaleX(1.4994);-webkit-text-stroke:0.1px currentColor;">n</span>
<span class="t" style="left:96.89px;top:275.60px;font-size:10.2px;line-height:11px;color:#2a2a2a;font-family:'Liberation Serif', serif;font-style:italic;transform:scaleX(1.3452);-webkit-text-stroke:0.1px currentColor;">k</span>
<span class="t" style="left:103.76px;top:258.01px;font-size:23.19px;line-height:26px;color:#2a2a2a;font-family:'Liberation Serif', serif;transform:scaleX(0.7796);-webkit-text-stroke:0.1px currentColor;">)</span>
<span class="t" style="left:111.57px;top:266.00px;font-size:12px;line-height:14px;color:#2a2a2a;font-family:'Liberation Serif', serif;font-style:italic;transform:scaleX(0.9630);-webkit-text-stroke:0.1px currentColor;">x</span>
<span class="t" style="left:117.44px;top:265.40px;font-size:8.64px;line-height:10px;color:#2a2a2a;font-family:'Liberation Serif', serif;font-style:italic;transform:scaleX(1.3997);-webkit-text-stroke:0.1px currentColor;">k</span>
<span class="t" style="left:124.31px;top:266.00px;font-size:12px;line-height:14px;color:#2a2a2a;font-family:'Liberation Serif', serif;font-style:italic;transform:scaleX(1.3602);-webkit-text-stroke:0.1px currentColor;">a</span>
<span class="t" style="left:132.65px;top:265.50px;font-size:8.64px;line-height:10px;color:#2a2a2a;font-family:'Liberation Serif', serif;font-style:italic;transform:scaleX(1.1502);-webkit-text-stroke:0.1px currentColor;">n−k</span>
<span class="t" style="left:14.44px;top:419.20px;font-size:12px;line-height:14px;color:#2a2a2a;font-family:'Liberation Serif', serif;font-style:italic;transform:scaleX(0.8209);-webkit-text-stroke:0.1px currentColor;">A</span>
<div class="b" style="left:25.20px;top:425.30px;width:7.80px;height:1px;background:#2a2a2a"></div>
<div class="b" style="left:25.20px;top:427.90px;width:7.80px;height:1px;background:#2a2a2a"></div>
<span class="t" style="left:36.84px;top:419.20px;font-size:12px;line-height:14px;color:#2a2a2a;font-family:'Liberation Serif', serif;font-style:italic;transform:scaleX(1.0096);-webkit-text-stroke:0.1px currentColor;">π</span>
<span class="t" style="left:43.01px;top:419.20px;font-size:12px;line-height:14px;color:#2a2a2a;font-family:'Liberation Serif', serif;font-style:italic;transform:scaleX(1.0238);-webkit-text-stroke:0.1px currentColor;">r</span>
<span class="t" style="left:50.12px;top:419.00px;font-size:8.399999999999999px;line-height:9px;color:#2a2a2a;font-family:'Liberation Serif', serif;transform:scaleX(1.2798);-webkit-text-stroke:0.1px currentColor;">2</span>
<span class="t" style="left:13.21px;top:512.00px;font-size:12px;line-height:14px;color:#2a2a2a;font-family:'Liberation Serif', serif;transform:scaleX(1.2745);-webkit-text-stroke:0.1px currentColor;">(</span>
<span class="t" style="left:17.73px;top:510.60px;font-size:12px;line-height:14px;color:#2a2a2a;font-family:'Liberation Serif', serif;transform:scaleX(1.2441);-webkit-text-stroke:0.1px currentColor;">1</span>
<span class="t" style="left:26.59px;top:510.60px;font-size:12px;line-height:14px;color:#2a2a2a;font-family:'Liberation Serif', serif;transform:scaleX(1.5233);-webkit-text-stroke:0.1px currentColor;">+</span>
<span class="t" style="left:39.47px;top:510.60px;font-size:12px;line-height:14px;color:#2a2a2a;font-family:'Liberation Serif', serif;font-style:italic;transform:scaleX(1.2130);-webkit-text-stroke:0.1px currentColor;">x</span>
<span class="t" style="left:45.28px;top:512.00px;font-size:12px;line-height:14px;color:#2a2a2a;font-family:'Liberation Serif', serif;transform:scaleX(1.4423);-webkit-text-stroke:0.1px currentColor;">)</span>
<span class="t" style="left:51.17px;top:509.80px;font-size:8.64px;line-height:10px;color:#2a2a2a;font-family:'Liberation Serif', serif;font-style:italic;transform:scaleX(1.4161);-webkit-text-stroke:0.1px currentColor;">n</span>
<div class="b" style="left:60.00px;top:517.70px;width:8.50px;height:1px;background:#2a2a2a"></div>
<div class="b" style="left:60.00px;top:520.50px;width:8.50px;height:1px;background:#2a2a2a"></div>
<span class="t" style="left:72.00px;top:510.60px;font-size:12px;line-height:14px;color:#2a2a2a;font-family:'Liberation Serif', serif;transform:scaleX(1.0798);-webkit-text-stroke:0.1px currentColor;">1</span>
<span class="t" style="left:80.84px;top:510.60px;font-size:12px;line-height:14px;color:#2a2a2a;font-family:'Liberation Serif', serif;transform:scaleX(1.2724);-webkit-text-stroke:0.1px currentColor;">+</span>
<span class="t" style="left:91.47px;top:501.60px;font-size:12px;line-height:14px;color:#2a2a2a;font-family:'Liberation Serif', serif;font-style:italic;transform:scaleX(1.2685);-webkit-text-stroke:0.1px currentColor;">nx</span>
<div class="b" style="left:92.00px;top:517.30px;width:13.70px;height:1px;background:#2a2a2a"></div>
<span class="t" style="left:93.39px;top:518.50px;font-size:12px;line-height:14px;color:#2a2a2a;font-family:'Liberation Serif', serif;transform:scaleX(1.1849);-webkit-text-stroke:0.1px currentColor;">1!</span>
<span class="t" style="left:108.08px;top:510.50px;font-size:12px;line-height:14px;color:#2a2a2a;font-family:'Liberation Serif', serif;transform:scaleX(1.3620);-webkit-text-stroke:0.1px currentColor;">+</span>
<span class="t" style="left:119.46px;top:501.90px;font-size:12px;line-height:14px;color:#2a2a2a;font-family:'Liberation Serif', serif;font-style:italic;transform:scaleX(1.2745);-webkit-text-stroke:0.1px currentColor;">n</span>
<span class="t" style="left:127.14px;top:500.83px;font-size:12.42px;line-height:14px;color:#2a2a2a;font-family:'Liberation Serif', serif;transform:scaleX(1.0106);-webkit-text-stroke:0.1px currentColor;">(</span>
<span class="t" style="left:131.13px;top:501.90px;font-size:12px;line-height:14px;color:#2a2a2a;font-family:'Liberation Serif', serif;font-style:italic;transform:scaleX(1.3529);-webkit-text-stroke:0.1px currentColor;">n</span>
<div class="b" style="left:141.40px;top:508.80px;width:7.70px;height:1px;background:#2a2a2a"></div>
<span class="t" style="left:151.43px;top:499.90px;font-size:14.09px;line-height:16px;color:#2a2a2a;font-family:'Liberation Serif', serif;transform:scaleX(1.0595);-webkit-text-stroke:0.1px currentColor;">1</span>
<span class="t" style="left:158.38px;top:500.83px;font-size:12.42px;line-height:14px;color:#2a2a2a;font-family:'Liberation Serif', serif;transform:scaleX(1.1150);-webkit-text-stroke:0.1px currentColor;">)</span>
<span class="t" style="left:164.19px;top:501.90px;font-size:12px;line-height:14px;color:#2a2a2a;font-family:'Liberation Serif', serif;font-style:italic;transform:scaleX(1.0556);-webkit-text-stroke:0.1px currentColor;">x</span>
<span class="t" style="left:170.81px;top:502.00px;font-size:7.27px;line-height:8px;color:#2a2a2a;font-family:'Liberation Serif', serif;transform:scaleX(1.5125);-webkit-text-stroke:0.1px currentColor;">2</span>
<div class="b" style="left:120.00px;top:517.30px;width:56.10px;height:1px;background:#2a2a2a"></div>
<span class="t" style="left:143.21px;top:519.34px;font-size:10.81px;line-height:12px;color:#2a2a2a;font-family:'Liberation Serif', serif;transform:scaleX(1.2102);-webkit-text-stroke:0.1px currentColor;">2!</span>
<span class="t" style="left:178.65px;top:510.50px;font-size:12px;line-height:14px;color:#2a2a2a;font-family:'Liberation Serif', serif;transform:scaleX(1.4158);-webkit-text-stroke:0.1px currentColor;">+</span>
<div class="b" style="left:190.20px;top:517.40px;width:1.6px;height:1.6px;border-radius:1px;background:#2a2a2a"></div>
<div class="b" style="left:194.85px;top:517.40px;width:1.6px;height:1.6px;border-radius:1px;background:#2a2a2a"></div>
<div class="b" style="left:199.50px;top:517.40px;width:1.6px;height:1.6px;border-radius:1px;background:#2a2a2a"></div>
<span class="t" style="left:13.51px;top:593.20px;font-size:12px;line-height:14px;color:#2a2a2a;font-family:'Liberation Serif', serif;font-style:italic;transform:scaleX(1.0897);-webkit-text-stroke:0.1px currentColor;">e</span>
<span class="t" style="left:19.97px;top:591.00px;font-size:8.64px;line-height:10px;color:#2a2a2a;font-family:'Liberation Serif', serif;font-style:italic;transform:scaleX(1.3117);-webkit-text-stroke:0.1px currentColor;">x</span>
<div class="b" style="left:30.00px;top:600.50px;width:8.50px;height:1px;background:#2a2a2a"></div>
<div class="b" style="left:30.00px;top:603.10px;width:8.50px;height:1px;background:#2a2a2a"></div>
<span class="t" style="left:41.48px;top:593.20px;font-size:12px;line-height:14px;color:#2a2a2a;font-family:'Liberation Serif', serif;transform:scaleX(1.1972);-webkit-text-stroke:0.1px currentColor;">1</span>
<span class="t" style="left:50.38px;top:593.20px;font-size:12px;line-height:14px;color:#2a2a2a;font-family:'Liberation Serif', serif;transform:scaleX(1.3620);-webkit-text-stroke:0.1px currentColor;">+</span>
<span class="t" style="left:64.07px;top:584.80px;font-size:12px;line-height:14px;color:#2a2a2a;font-family:'Liberation Serif', serif;font-style:italic;transform:scaleX(0.9444);-webkit-text-stroke:0.1px currentColor;">x</span>
<div class="b" style="left:61.30px;top:599.50px;width:10.20px;height:1px;background:#2a2a2a"></div>
<span class="t" style="left:61.08px;top:600.90px;font-size:12px;line-height:14px;color:#2a2a2a;font-family:'Liberation Serif', serif;transform:scaleX(1.0937);-webkit-text-stroke:0.1px currentColor;">1!</span>
<span class="t" style="left:74.97px;top:593.20px;font-size:12px;line-height:14px;color:#2a2a2a;font-family:'Liberation Serif', serif;transform:scaleX(1.2186);-webkit-text-stroke:0.1px currentColor;">+</span>
<span class="t" style="left:86.09px;top:584.80px;font-size:12px;line-height:14px;color:#2a2a2a;font-family:'Liberation Serif', serif;font-style:italic;transform:scaleX(1.0370);-webkit-text-stroke:0.1px currentColor;">x</span>
<span class="t" style="left:92.00px;top:584.50px;font-size:8.399999999999999px;line-height:9px;color:#2a2a2a;font-family:'Liberation Serif', serif;transform:scaleX(1.3095);-webkit-text-stroke:0.1px currentColor;">2</span>
<div class="b" style="left:85.00px;top:599.50px;width:12.70px;height:1px;background:#2a2a2a"></div>
<span class="t" style="left:86.14px;top:600.90px;font-size:12px;line-height:14px;color:#2a2a2a;font-family:'Liberation Serif', serif;transform:scaleX(1.0417);-webkit-text-stroke:0.1px currentColor;">2!</span>
<span class="t" style="left:101.28px;top:593.20px;font-size:12px;line-height:14px;color:#2a2a2a;font-family:'Liberation Serif', serif;transform:scaleX(1.2007);-webkit-text-stroke:0.1px currentColor;">+</span>
<span class="t" style="left:112.29px;top:584.80px;font-size:12px;line-height:14px;color:#2a2a2a;font-family:'Liberation Serif', serif;font-style:italic;transform:scaleX(1.0370);-webkit-text-stroke:0.1px currentColor;">x</span>
<span class="t" style="left:118.22px;top:584.50px;font-size:8.399999999999999px;line-height:9px;color:#2a2a2a;font-family:'Liberation Serif', serif;transform:scaleX(1.2622);-webkit-text-stroke:0.1px currentColor;">3</span>
<div class="b" style="left:111.30px;top:599.50px;width:12.70px;height:1px;background:#2a2a2a"></div>
<span class="t" style="left:112.44px;top:600.90px;font-size:12px;line-height:14px;color:#2a2a2a;font-family:'Liberation Serif', serif;transform:scaleX(1.0294);-webkit-text-stroke:0.1px currentColor;">3!</span>
<span class="t" style="left:127.38px;top:593.20px;font-size:12px;line-height:14px;color:#2a2a2a;font-family:'Liberation Serif', serif;transform:scaleX(1.3620);-webkit-text-stroke:0.1px currentColor;">+</span>
<div class="b" style="left:138.50px;top:599.80px;width:1.6px;height:1.6px;border-radius:1px;background:#2a2a2a"></div>
<div class="b" style="left:142.75px;top:599.80px;width:1.6px;height:1.6px;border-radius:1px;background:#2a2a2a"></div>
<div class="b" style="left:147.00px;top:599.80px;width:1.6px;height:1.6px;border-radius:1px;background:#2a2a2a"></div>
<span class="t" style="left:151.55px;top:594.00px;font-size:12px;line-height:14px;color:#2a2a2a;font-family:'Liberation Serif', serif;transform:scaleX(1.0753);-webkit-text-stroke:0.1px currentColor;">,</span>
<div class="b" style="left:179.10px;top:600.30px;width:6.90px;height:1px;background:#2a2a2a"></div>
<span class="t" style="left:185.93px;top:593.00px;font-size:12px;line-height:14px;color:#2a2a2a;font-family:'Liberation Serif', serif;transform:scaleX(1.3542);-webkit-text-stroke:0.1px currentColor;">∞</span>
<span class="t" style="left:200.17px;top:593.20px;font-size:12px;line-height:14px;color:#2a2a2a;font-family:'Liberation Serif', serif;transform:scaleX(1.3799);-webkit-text-stroke:0.1px currentColor;">&lt;</span>
<span class="t" style="left:213.20px;top:593.20px;font-size:12px;line-height:14px;color:#2a2a2a;font-family:'Liberation Serif', serif;font-style:italic;transform:scaleX(1.0926);-webkit-text-stroke:0.1px currentColor;">x</span>
<span class="t" style="left:221.37px;top:593.20px;font-size:12px;line-height:14px;color:#2a2a2a;font-family:'Liberation Serif', serif;transform:scaleX(1.3799);-webkit-text-stroke:0.1px currentColor;">&lt;</span>
<span class="t" style="left:234.49px;top:593.00px;font-size:12px;line-height:14px;color:#2a2a2a;font-family:'Liberation Serif', serif;transform:scaleX(1.2109);-webkit-text-stroke:0.1px currentColor;">∞</span>
</body></html>
